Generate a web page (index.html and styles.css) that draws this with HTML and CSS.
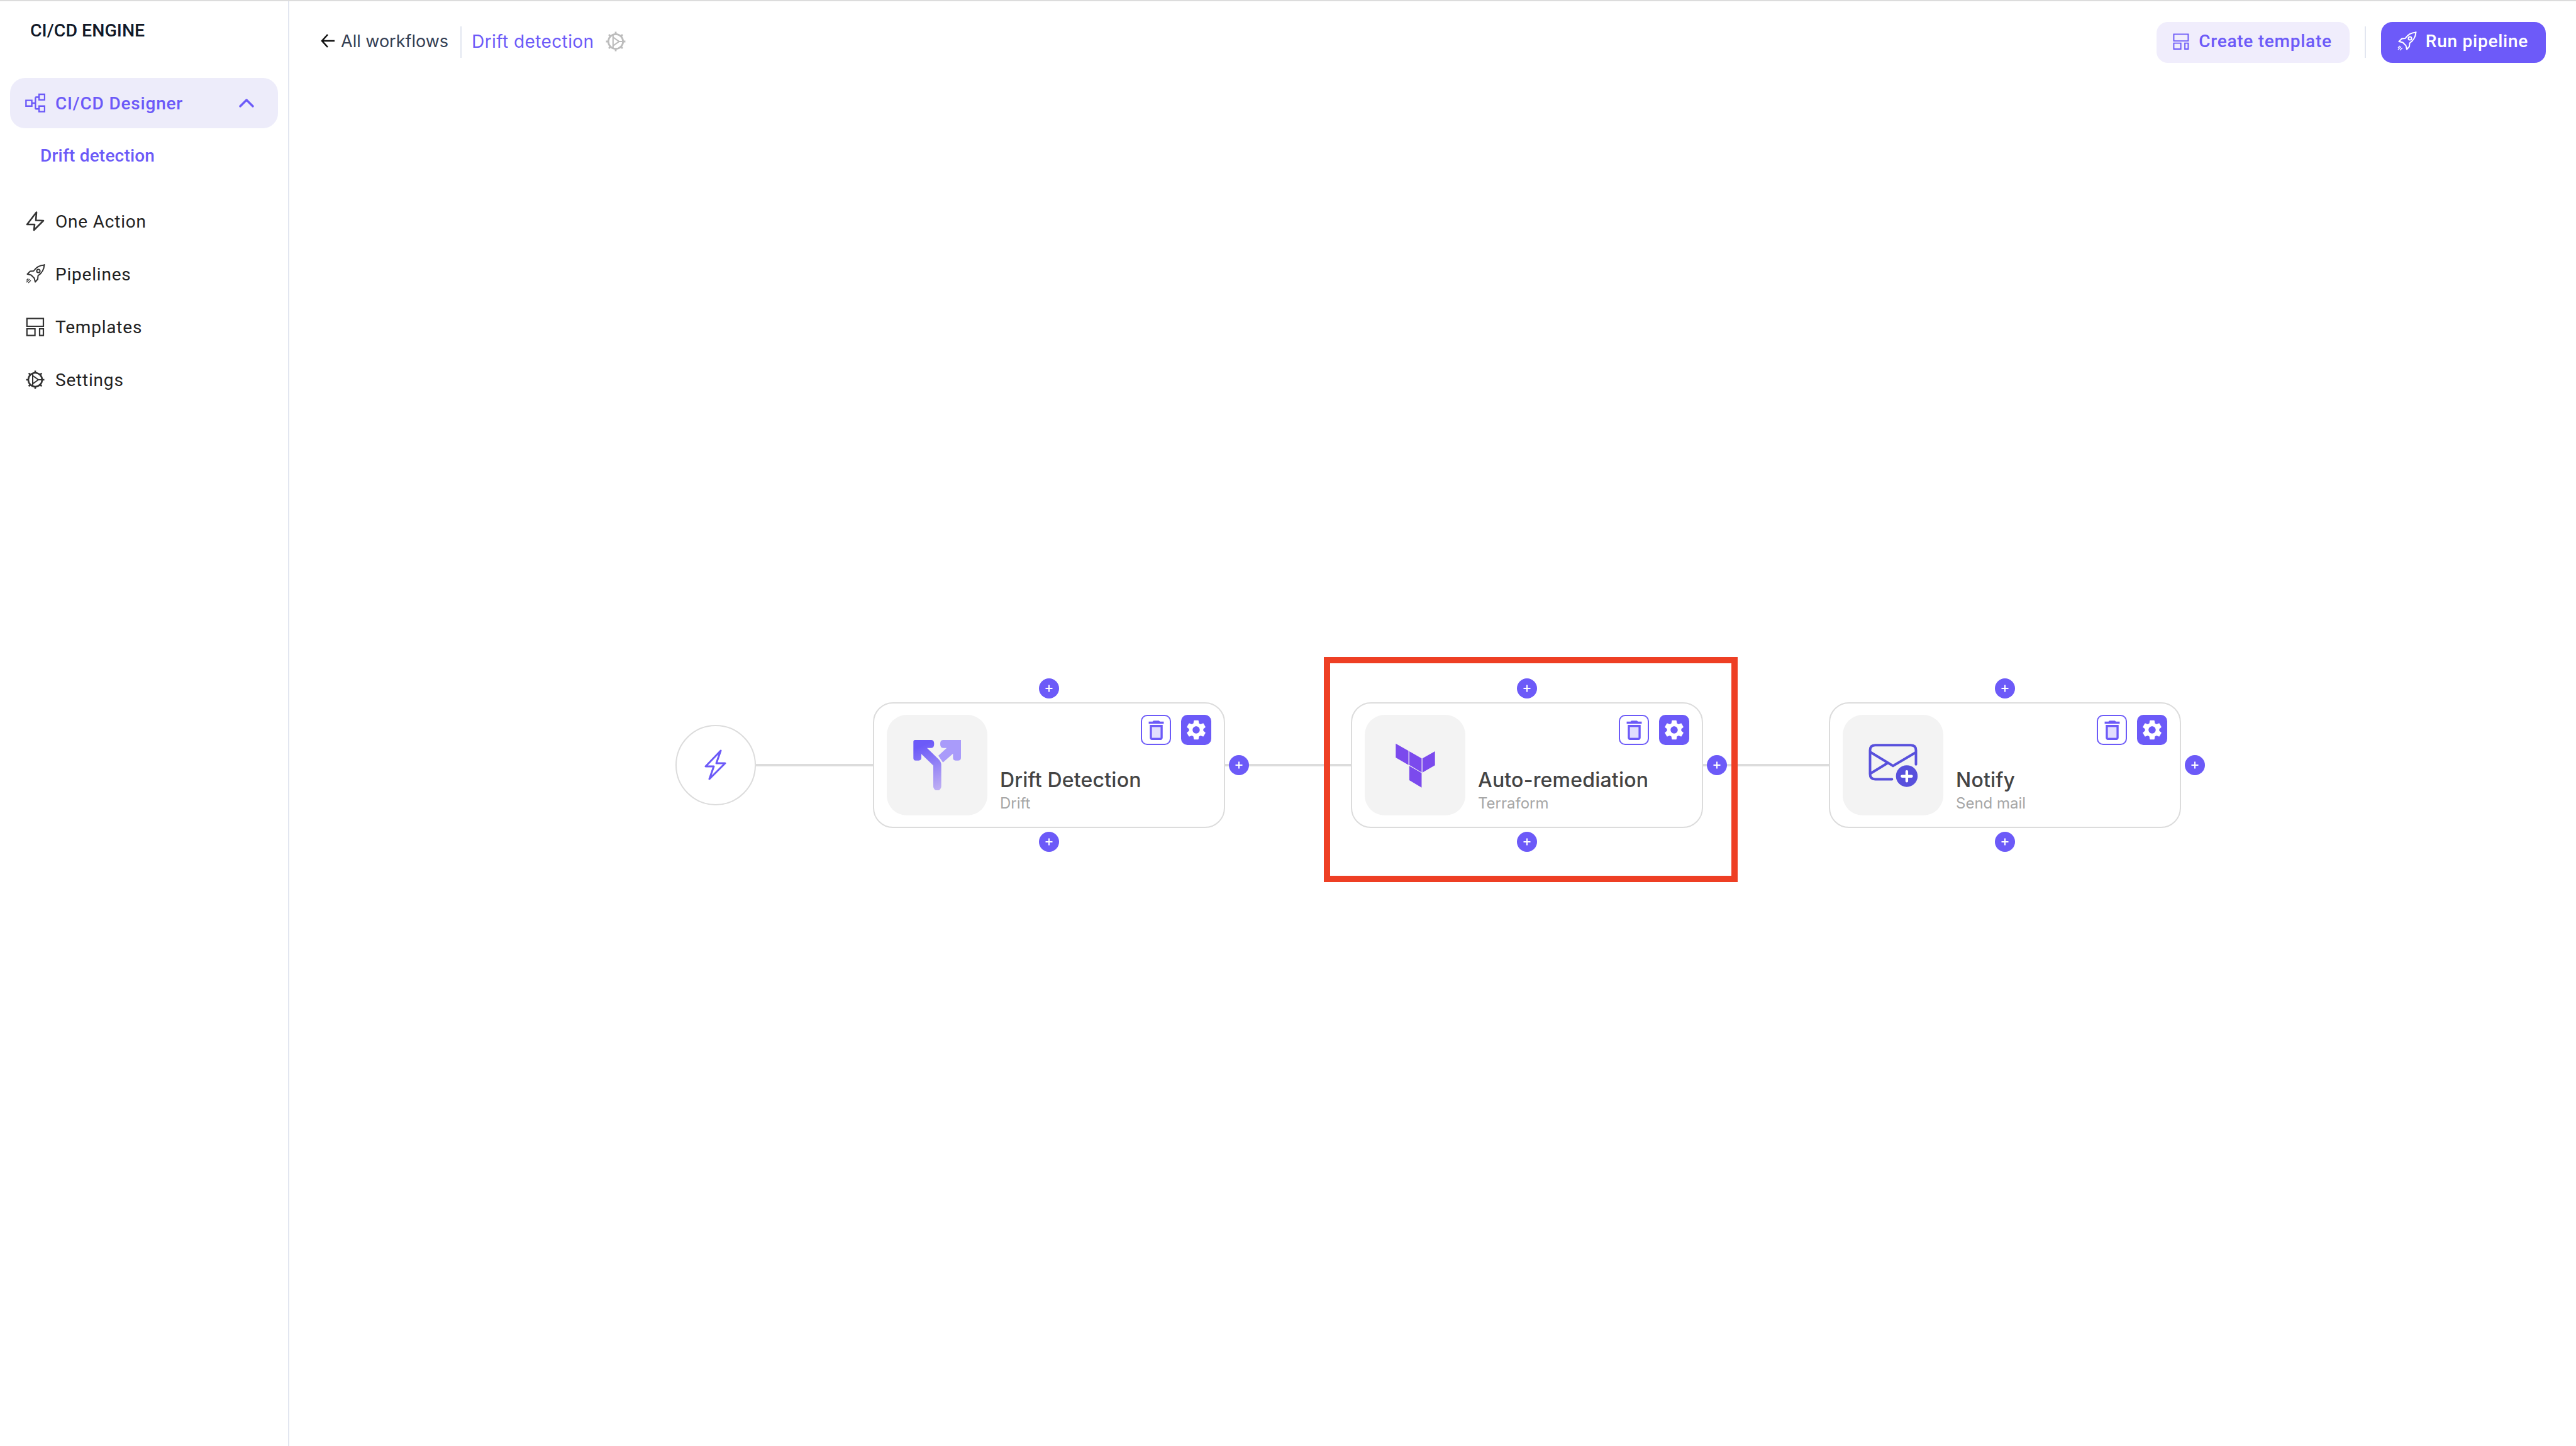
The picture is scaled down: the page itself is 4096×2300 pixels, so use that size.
FILE: index.html
```html
<!DOCTYPE html>
<html lang="en">
<head>
    <meta charset="UTF-8">
    <title>CI/CD Engine - Drift detection</title>
    <link rel="stylesheet" href="styles.css">
</head>
<body>
    <svg class="defs" width="0" height="0">
        <symbol id="i-rocket" viewBox="0 0 32 32">
            <path d="M30.5 1.5c-7.5.5-13 3.5-17 9.5l-5.5.5-4.5 4.5 6 1.5 5 5 1.5 6 4-4.5.5-5.5c6-4 9.5-10 10-17.5z" fill="none" stroke="currentColor" stroke-width="2" stroke-linejoin="round"/>
            <circle cx="21" cy="11" r="2.6" fill="none" stroke="currentColor" stroke-width="2"/>
            <path d="M7 24l-5 5M9 26l-4 4M5 23l-3 3" fill="none" stroke="currentColor" stroke-width="1.3"/>
        </symbol>
        <symbol id="i-templates" viewBox="0 0 32 32">
            <path d="M2.8 2.7h26.2v12.3H2.8zM2.8 19h12.8v10.7H2.8zM23 19h6v10.7h-6z" fill="none" stroke="currentColor" stroke-width="2.2"/>
        </symbol>
        <symbol id="i-cog" viewBox="0 0 32 32">
            <circle cx="16" cy="16" r="11" fill="none" stroke="currentColor" stroke-width="2.6"/>
            <path d="M16 1.5v4M16 26.5v4M1.5 16h4M26.5 16h4M5.7 5.7l3 3M23.3 23.3l3 3M5.7 26.3l3-3M23.3 8.7l3-3" fill="none" stroke="currentColor" stroke-width="2.6"/>
            <path d="M12 6.5v19M12 9.5l9 6.5-9 6.5M21 16h5" fill="none" stroke="currentColor" stroke-width="2"/>
        </symbol>
        <symbol id="i-plus" viewBox="0 0 32 32">
            <path d="M16 10.5v11M10.5 16h11" fill="none" stroke="#fff" stroke-width="2"/>
        </symbol>
        <symbol id="i-trash" viewBox="0 0 24 24">
            <path d="M8 9h8v10H8z" fill="currentColor" opacity=".2"/>
            <path d="M15.5 4l-1-1h-5l-1 1H5v2h14V4zM6 19c0 1.1.9 2 2 2h8c1.1 0 2-.9 2-2V7H6v12zM8 9h8v10H8V9z" fill="currentColor"/>
        </symbol>
        <symbol id="i-gear" viewBox="0 0 24 24">
            <path d="M19.14 12.94c.04-.3.06-.61.06-.94 0-.32-.02-.64-.07-.94l2.03-1.58c.18-.14.23-.41.12-.61l-1.92-3.32c-.12-.22-.37-.29-.59-.22l-2.39.96c-.5-.38-1.03-.7-1.62-.94l-.36-2.54c-.04-.24-.24-.41-.48-.41h-3.84c-.24 0-.43.17-.47.41l-.36 2.54c-.59.24-1.13.57-1.62.94l-2.39-.96c-.22-.08-.47 0-.59.22L2.74 8.87c-.12.21-.08.47.12.61l2.03 1.58c-.05.3-.09.63-.09.94s.02.64.07.94l-2.03 1.58c-.18.14-.23.41-.12.61l1.92 3.32c.12.22.37.29.59.22l2.39-.96c.5.38 1.03.7 1.62.94l.36 2.54c.05.24.24.41.48.41h3.84c.24 0 .44-.17.47-.41l.36-2.54c.59-.24 1.13-.56 1.62-.94l2.39.96c.22.08.47 0 .59-.22l1.92-3.32c.12-.22.07-.47-.12-.61l-2.01-1.58zM12 15.6c-1.98 0-3.6-1.62-3.6-3.6s1.62-3.6 3.6-3.6 3.6 1.62 3.6 3.6-1.62 3.6-3.6 3.6z" fill="#fff"/>
        </symbol>
        <linearGradient id="drift-grad" gradientUnits="userSpaceOnUse" x1="190" y1="170" x2="280" y2="385">
            <stop offset="0" stop-color="#6c5af8"/>
            <stop offset="1" stop-color="#c2b2f3"/>
        </linearGradient>
    </svg>

    <div class="app">
        <!-- Sidebar -->
        <div class="sidebar">
            <div class="logo">CI/CD ENGINE</div>
            <div class="nav-item active">
                <svg class="nav-icon" viewBox="120 450 94 88">
                    <path d="M124 481h27v27h-27zM185 453h26v26h-26zM185 508h26v26h-26zM151 494h17M168 466v56M168 466h17M168 521h17" fill="none" stroke="currentColor" stroke-width="7"/>
                </svg>
                <span>CI/CD Designer</span>
                <svg class="chevron" viewBox="0 0 24 16">
                    <path d="M2 13L12 3l10 10" fill="none" stroke="currentColor" stroke-width="3.4" stroke-linecap="round" stroke-linejoin="round"/>
                </svg>
            </div>
            <div class="sub-item">Drift detection</div>
            <div class="nav-list">
                <div class="nav-item">
                    <svg class="nav-icon" viewBox="0 0 32 32">
                        <path d="M18 1.5L3 21h12l-1 9 15-15-12-.5z" fill="none" stroke="currentColor" stroke-width="2.6" stroke-linejoin="round"/>
                    </svg>
                    <span>One Action</span>
                </div>
                <div class="nav-item">
                    <svg class="nav-icon"><use href="#i-rocket"/></svg>
                    <span>Pipelines</span>
                </div>
                <div class="nav-item">
                    <svg class="nav-icon"><use href="#i-templates"/></svg>
                    <span>Templates</span>
                </div>
                <div class="nav-item">
                    <svg class="nav-icon"><use href="#i-cog"/></svg>
                    <span>Settings</span>
                </div>
            </div>
        </div>

        <!-- Main area -->
        <div class="main">
            <div class="topbar">
                <div class="crumbs">
                    <svg class="back-arrow" viewBox="0 0 24 24">
                        <path d="M22 12H3M11 2L2 12l9 10" fill="none" stroke="#111" stroke-width="2.6"/>
                    </svg>
                    <span class="crumb-back">All workflows</span>
                    <span class="vline"></span>
                    <span class="crumb-current">Drift detection</span>
                    <svg class="crumb-gear"><use href="#i-cog"/></svg>
                </div>
                <div class="top-actions">
                    <button class="btn btn-light">
                        <svg class="btn-icon-sm"><use href="#i-templates"/></svg>
                        Create template
                    </button>
                    <span class="vline"></span>
                    <button class="btn btn-primary">
                        <svg class="btn-icon"><use href="#i-rocket"/></svg>
                        Run pipeline
                    </button>
                </div>
            </div>

            <!-- Workflow -->
            <div class="flow">
                <div class="start-node">
                    <svg class="start-bolt" viewBox="0 0 36 50">
                        <path d="M26 2L2 27h13L8 47 33 22H19z" fill="none" stroke="#6c5af8" stroke-width="3" stroke-linejoin="round"/>
                    </svg>
                </div>
                <div class="link link-first"></div>

                <div class="card">
                    <div class="card-icon">
                        <svg class="art" viewBox="150 140 240 240">
                            <path d="M157 148q0-8 8-8H243q13 0 13 19t-13 19H222L279 234q11 11 11 26V362a19 19 0 0 1-38 0V262L195 207V225q0 13-13 13H168q-11 0-11-11z" fill="url(#drift-grad)"/>
                            <path d="M285 159q0-19 13-19H384V225q0 13-13 13H358q-12 0-12-13V205L298 247 276 215 316 178H298q-13 0-13-19z" fill="#a99bfa"/>
                        </svg>
                    </div>
                    <div class="card-body">
                        <div class="card-actions">
                            <span class="act act-outline"><svg class="act-trash"><use href="#i-trash"/></svg></span>
                            <span class="act act-solid"><svg class="act-gear"><use href="#i-gear"/></svg></span>
                        </div>
                        <div class="card-title">Drift Detection</div>
                        <div class="card-sub">Drift</div>
                    </div>
                    <span class="plus plus-top"><svg><use href="#i-plus"/></svg></span>
                    <span class="plus plus-right"><svg><use href="#i-plus"/></svg></span>
                    <span class="plus plus-bottom"><svg><use href="#i-plus"/></svg></span>
                </div>
                <div class="link"></div>

                <div class="card">
                    <div class="card-icon">
                        <svg class="art-tf" viewBox="170 150 200 220">
                            <path d="M176 155l61 35v68l-61-36zM241 192l59 34v67l-59-35zM304 226l60-34v67l-60 35zM241 262l59 34v70l-59-35z" fill="#7b4aed"/>
                        </svg>
                    </div>
                    <div class="card-body">
                        <div class="card-actions">
                            <span class="act act-outline"><svg class="act-trash"><use href="#i-trash"/></svg></span>
                            <span class="act act-solid"><svg class="act-gear"><use href="#i-gear"/></svg></span>
                        </div>
                        <div class="card-title">Auto-remediation</div>
                        <div class="card-sub">Terraform</div>
                    </div>
                    <span class="plus plus-top"><svg><use href="#i-plus"/></svg></span>
                    <span class="plus plus-right"><svg><use href="#i-plus"/></svg></span>
                    <span class="plus plus-bottom"><svg><use href="#i-plus"/></svg></span>
                    <div class="highlight"></div>
                </div>
                <div class="link"></div>

                <div class="card">
                    <div class="card-icon">
                        <svg class="art-mail" viewBox="150 150 240 220">
                            <path d="M265 326H185q-25 0-25-25V188q0-25 25-25H355q25 0 25 25V255M165 198l105 64 108-64M160 300l85-52" fill="none" stroke="#5850dc" stroke-width="12" stroke-linecap="round"/>
                            <circle cx="336" cy="311" r="52" fill="#5850dc"/>
                            <path d="M336 289v46M313 312h46" fill="none" stroke="#fff" stroke-width="13" stroke-linecap="round"/>
                        </svg>
                    </div>
                    <div class="card-body">
                        <div class="card-actions">
                            <span class="act act-outline"><svg class="act-trash"><use href="#i-trash"/></svg></span>
                            <span class="act act-solid"><svg class="act-gear"><use href="#i-gear"/></svg></span>
                        </div>
                        <div class="card-title">Notify</div>
                        <div class="card-sub">Send mail</div>
                    </div>
                    <span class="plus plus-top"><svg><use href="#i-plus"/></svg></span>
                    <span class="plus plus-right"><svg><use href="#i-plus"/></svg></span>
                    <span class="plus plus-bottom"><svg><use href="#i-plus"/></svg></span>
                </div>
            </div>
        </div>
    </div>
</body>
</html>
```

FILE: styles.css
```css
html, body {
    margin: 0;
    padding: 0;
    height: 100%;
}
body {
    font-family: 'Inter', sans-serif;
    background-color: #fff;
    border-top: 2px solid #dcdcdc;
    box-sizing: border-box;
    color: #222;
}
.defs {
    position: absolute;
}
.app {
    display: flex;
    height: 100%;
}

/* Sidebar */
.sidebar {
    width: 460px;
    flex: none;
    box-sizing: border-box;
    border-right: 2px solid #e2e6f0;
    padding: 0 16px;
}
.logo {
    font-family: 'Roboto', sans-serif;
    font-size: 28.5px;
    font-weight: 500;
    line-height: 34px;
    color: #111827;
    padding: 30px 0 0 32px;
    margin-bottom: 58px;
}
.nav-item {
    display: flex;
    align-items: center;
    height: 80px;
    padding-left: 24px;
    font-family: 'Roboto', sans-serif;
    font-size: 28px;
    letter-spacing: 0.8px;
    color: #222;
}
.nav-item.active {
    background-color: #edecfa;
    border-radius: 24px;
    color: #6c5af8;
    font-weight: 500;
}
.nav-icon {
    width: 32px;
    height: 32px;
    flex: none;
    margin-right: 16px;
    color: #333;
}
.active .nav-icon {
    color: #6c5af8;
}
.chevron {
    width: 24px;
    height: 16px;
    margin-left: auto;
    margin-right: 38px;
}
.sub-item {
    font-family: 'Roboto', sans-serif;
    font-size: 28px;
    font-weight: 500;
    letter-spacing: 0.2px;
    line-height: 40px;
    color: #6c5af8;
    padding: 24px 0 0 48px;
}
.nav-list {
    margin-top: 42px;
}
.nav-list .nav-item {
    height: 84px;
}

/* Top bar */
.main {
    flex: 1;
    min-width: 0;
}
.topbar {
    display: flex;
    align-items: center;
    justify-content: space-between;
    height: 130px;
    padding: 0 48px 0 50px;
}
.crumbs,
.top-actions {
    display: flex;
    align-items: center;
}
.vline {
    width: 2px;
    height: 50px;
    background-color: #e2e6f0;
}
.back-arrow {
    width: 24px;
    height: 24px;
    margin: 0 8px 4px 0;
}
.crumb-back {
    font-size: 27px;
    color: #344054;
    margin: 0 19px 3px 0;
}
.crumb-current {
    font-size: 28px;
    letter-spacing: 0.4px;
    color: #6c5af8;
    margin: 0 18px 3px 16px;
}
.crumb-gear {
    width: 34px;
    height: 34px;
    margin-bottom: 3px;
    color: #bcbcbc;
}
.top-actions .vline {
    margin: 0 24px;
}
.btn {
    display: flex;
    align-items: center;
    height: 65px;
    border: none;
    border-radius: 18px;
    padding: 0 28px 3px 25px;
    font-family: 'Roboto', sans-serif;
    font-size: 28px;
    font-weight: 500;
    letter-spacing: 0.75px;
}
.btn-light {
    background-color: #f0edfc;
    color: #6c5af8;
}
.btn-primary {
    background-color: #6d5af9;
    color: #fff;
}
.btn-icon-sm {
    width: 28px;
    height: 28px;
    margin-right: 14px;
}
.btn-icon {
    width: 32px;
    height: 32px;
    margin-right: 14px;
}

/* Workflow */
.flow {
    display: flex;
    align-items: center;
    padding: 985px 0 0 614px;
}
.start-node {
    width: 128px;
    height: 128px;
    flex: none;
    box-sizing: border-box;
    border: 2px solid #dcdcdc;
    border-radius: 50%;
    display: flex;
    align-items: center;
    justify-content: center;
}
.start-bolt {
    width: 36px;
    height: 50px;
}
.link {
    width: 200px;
    height: 4px;
    flex: none;
    background-color: #dcdcdc;
}
.link-first {
    width: 186px;
}
.card {
    position: relative;
    display: flex;
    width: 560px;
    height: 200px;
    flex: none;
    box-sizing: border-box;
    border: 2px solid #dcdcdc;
    border-radius: 32px;
    padding: 18px 20px;
}
.card-icon {
    width: 160px;
    height: 160px;
    flex: none;
    background-color: #f3f3f3;
    border-radius: 32px;
    display: flex;
    align-items: center;
    justify-content: center;
}
.art {
    width: 80px;
    height: 80px;
}
.art-tf {
    width: 67px;
    height: 73px;
}
.art-mail {
    width: 80px;
    height: 73px;
}
.card-body {
    flex: 1;
    min-width: 0;
    margin-left: 20px;
    padding-bottom: 4px;
    display: flex;
    flex-direction: column;
}
.card-actions {
    display: flex;
    justify-content: flex-end;
    gap: 16px;
    margin-bottom: auto;
}
.act {
    width: 48px;
    height: 48px;
    box-sizing: border-box;
    border-radius: 10px;
    display: flex;
    align-items: center;
    justify-content: center;
}
.act-outline {
    border: 2px solid #6c5af8;
    color: #6c5af8;
}
.act-solid {
    background-color: #6c5af8;
}
.act-trash {
    width: 41px;
    height: 41px;
    flex: none;
}
.act-gear {
    width: 38px;
    height: 38px;
    flex: none;
}
.card-title {
    font-size: 32px;
    font-weight: 500;
    letter-spacing: 0.2px;
    line-height: 40px;
    margin-bottom: 2px;
    color: #444;
}
.card-sub {
    font-size: 24px;
    line-height: 30px;
    color: #a6a6a6;
}
.plus {
    position: absolute;
    width: 32px;
    height: 32px;
    border-radius: 50%;
    background-color: #6c5af8;
}
.plus svg {
    display: block;
    width: 32px;
    height: 32px;
}
.plus-top {
    top: -40px;
    left: 262px;
}
.plus-bottom {
    bottom: -40px;
    left: 262px;
}
.plus-right {
    right: -40px;
    top: 82px;
}
.highlight {
    position: absolute;
    left: -45px;
    top: -74px;
    width: 658px;
    height: 358px;
    box-sizing: border-box;
    border: 10px solid #ee3f24;
}
```
